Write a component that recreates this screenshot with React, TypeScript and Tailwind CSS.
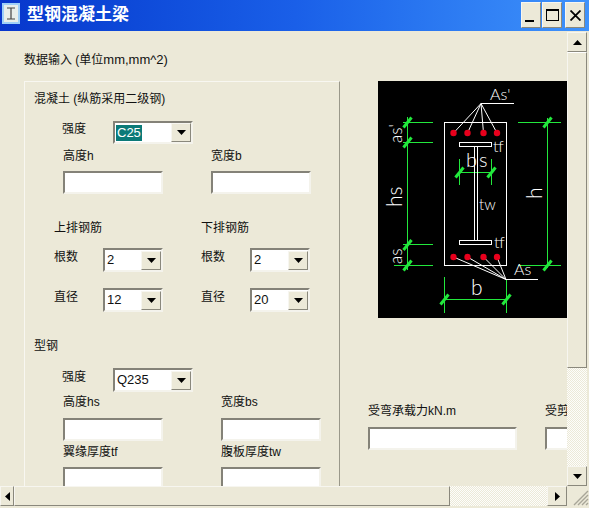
const raised = "border border-t-[#f7f6f0] border-l-[#f7f6f0] border-r-[#8a887c] border-b-[#8a887c] bg-[#ece9d8]";
const sunken = "border-2 border-t-[#848278] border-l-[#848278] border-r-[#f4f3ec] border-b-[#f4f3ec] bg-white";
const track = "bg-[repeating-conic-gradient(#ece9d8_0_25%,#fdfdfb_0_50%)] bg-[length:2px_2px]";

const Arrow = ({ dir }: { dir: "up" | "down" | "left" | "right" }) => {
  const pts = { up: "0,5 9,5 4.5,0", down: "0,0 9,0 4.5,5", left: "5,0 5,9 0,4.5", right: "0,0 0,9 5,4.5" }[dir];
  const horizontal = dir === "left" || dir === "right";
  return (
    <svg width={horizontal ? 5 : 9} height={horizontal ? 9 : 5} viewBox={horizontal ? "0 0 5 9" : "0 0 9 5"}>
      <polygon points={pts} fill="#000" />
    </svg>
  );
};

const Select = ({ value, width, height, selected }: { value: string; width: string; height: string; selected?: boolean }) => (
  <div className={`${width} ${height} ${sunken} flex items-center justify-between`}>
    <span className={selected ? "ml-[1px] bg-[#0b7a78] px-[1px] text-white text-[13px] leading-[16px]" : "ml-[2px] text-[13px] leading-[16px] text-[#111]"}>
      {value}
    </span>
    <div className={`${raised} w-[20px] h-[19px] flex items-center justify-center`}>
      <Arrow dir="down" />
    </div>
  </div>
);

const Field = ({ label, gap }: { label: string; gap: string }) => (
  <div className="flex flex-col">
    <div className="h-4 leading-4 whitespace-nowrap">{label}</div>
    <div className={`${gap} ${sunken} w-[100px] h-[23px]`} />
  </div>
);

const RebarColumn = ({ title, count, dia }: { title: string; count: string; dia: string }) => (
  <div className="flex flex-col w-[147px] shrink-0">
    <div className="h-4 leading-4">{title}</div>
    <div className="flex mt-3">
      <div className="w-[49px] h-4 leading-4 mt-[1px]">根数</div>
      <Select value={count} width="w-[60px]" height="h-[24px]" />
    </div>
    <div className="flex mt-4">
      <div className="w-[49px] h-4 leading-4 mt-[1px]">直径</div>
      <Select value={dia} width="w-[60px]" height="h-[24px]" />
    </div>
  </div>
);

const Tick = ({ x, y }: { x: number; y: number }) => (
  <line x1={x - 4} y1={y + 5} x2={x + 4} y2={y - 5} stroke="#22e83c" strokeWidth="3" />
);

const Rebar = ({ x, y }: { x: number; y: number }) => <circle cx={x} cy={y} r="3.2" fill="#e8001c" />;

const BeamDrawing = () => {
  const green = "#22e83c";
  const rebars = [453.5, 467.5, 483.5, 497];
  const cad = { fill: "#fff", fontFamily: "Lato, 'Liberation Sans', sans-serif", fontWeight: 300 };
  return (
    <svg width="189" height="237" viewBox="378 81 189 237" className="block ml-[10px] bg-black shrink-0">
      <g stroke={green} strokeWidth="1" fill="none">
        <path d="M407.5 117V270M403 122.5H433M403 142.5H433M403 244.5H433M394 265.5H433" />
        <path d="M547.5 118V268M518 122.5H561M518 265.5H561" />
        <path d="M444.5 277V313M506.5 279V313M444.5 299.5H506.5" />
        <path d="M459.5 159V185M491.5 159V185M459.5 172.5H491.5" />
      </g>
      <Tick x={407.5} y={122.5} />
      <Tick x={407.5} y={142.5} />
      <Tick x={407.5} y={245} />
      <Tick x={407.5} y={265.5} />
      <Tick x={547.5} y={122.5} />
      <Tick x={547.5} y={265.5} />
      <Tick x={444.5} y={299.5} />
      <Tick x={506.5} y={299.5} />
      <Tick x={459.5} y={172.5} />
      <Tick x={491.5} y={172.5} />

      <g stroke="#fff" strokeWidth="1" fill="none">
        <rect x="444.5" y="122.5" width="62" height="143" />
        <rect x="459.5" y="142.5" width="32" height="4" />
        <rect x="459.5" y="240.5" width="32" height="4" />
        <path d="M474.5 146.5V240.5M477.5 146.5V240.5" />
        <path d="M481 103.5H514" />
        {rebars.map((x) => (
          <line key={x} x1="481" y1="103.5" x2={x} y2="133" />
        ))}
        <path d="M506 279.5H538" />
        {rebars.map((x) => (
          <line key={x} x1="506" y1="279.5" x2={x} y2="257" />
        ))}
      </g>
      {rebars.map((x) => (
        <Rebar key={`t${x}`} x={x} y={133} />
      ))}
      {rebars.map((x) => (
        <Rebar key={`b${x}`} x={x} y={257} />
      ))}

      <g {...cad}>
        <text x="490" y="100" fontSize="16">As'</text>
        <text x="493" y="152" fontSize="16">tf</text>
        <text x="494" y="248" fontSize="16">tf</text>
        <text x="479" y="210" fontSize="15">tw</text>
        <text x="466" y="167" fontSize="20" letterSpacing="2">bs</text>
        <text x="514" y="275" fontSize="16">As</text>
        <text x="471" y="295" fontSize="21">b</text>
        <text transform="translate(402 143) rotate(-90)" fontSize="17">as'</text>
        <text transform="translate(402 207) rotate(-90)" fontSize="21">hs</text>
        <text transform="translate(402 264) rotate(-90)" fontSize="17">as</text>
        <text transform="translate(542 199) rotate(-90)" fontSize="21">h</text>
      </g>
    </svg>
  );
};

const TitleBar = () => (
  <div className="h-[31px] shrink-0 flex items-start bg-gradient-to-r from-[#0836cc] via-[#1a5fe8] to-[#3f92fb]">
    <svg width="18" height="21" viewBox="0 0 18 21" className="ml-[2px] mt-[3px] shrink-0">
      <rect x="0" y="0" width="18" height="21" fill="#9fd0f8" />
      <rect x="2" y="2" width="14" height="17" fill="#e8eeea" />
      <path d="M5 5H13M5 16H13M9 5V16" stroke="#444" strokeWidth="1.2" fill="none" />
    </svg>
    <div className="ml-[7px] h-[31px] leading-[30px] text-[17px] font-bold text-white whitespace-nowrap">型钢混凝土梁</div>
    <div className="ml-auto mr-[4px] mt-[2px] flex">
      <div className={`${raised} w-[20px] h-[26px]`}>
        <div className="mt-[17px] ml-[3px] w-[9px] h-[2px] bg-black" />
      </div>
      <div className={`${raised} w-[20px] h-[26px] ml-[1px] flex items-center justify-center`}>
        <div className="w-[13px] h-[12px] border border-t-2 border-black" />
      </div>
      <div className={`${raised} w-[20px] h-[26px] ml-[3px] flex items-center justify-center`}>
        <svg width="11" height="11" viewBox="0 0 11 11">
          <path d="M0.5 0.5L10.5 10.5M10.5 0.5L0.5 10.5" stroke="#000" strokeWidth="1.8" />
        </svg>
      </div>
    </div>
  </div>
);

const LeftColumn = () => (
  <div className="w-[340px] shrink-0 pl-6 pt-[21px]">
    <div className="h-4 leading-4 whitespace-nowrap">数据输入 (单位<span className="text-[13px]">mm,mm^2)</span></div>

    {/* one big group: light top and left edge, dark right edge, bottom is scrolled away */}
    <div className="mt-[13px] w-[316px] h-[500px] border-t border-l border-r border-t-[#f8f7f1] border-l-[#f8f7f1] border-r-[#9a988a]">
      <div className="h-[230px]">
        <div className="pt-[9px] ml-[9px] h-[25px] leading-4 whitespace-nowrap">混凝土 (纵筋采用二级钢)</div>
        <div className="flex mt-[14px] ml-[37px]">
          <div className="w-[51px] h-4 leading-4">强度</div>
          <Select value="C25" width="w-[80px]" height="h-[23px]" selected />
        </div>
        <div className="flex mt-[4px] ml-[38px]">
          <div className="w-[148px]"><Field label="高度h" gap="mt-[7px]" /></div>
          <Field label="宽度b" gap="mt-[7px]" />
        </div>
        <div className="flex mt-[26px] ml-[29px]">
          <RebarColumn title="上排钢筋" count="2" dia="12" />
          <RebarColumn title="下排钢筋" count="2" dia="20" />
        </div>
      </div>

      <div className="pt-[26px] ml-[9px] h-[42px] leading-4">型钢</div>
      <div className="flex mt-[14px] ml-[37px]">
        <div className="w-[51px] h-4 leading-4 mt-[1px]">强度</div>
        <Select value="Q235" width="w-[80px]" height="h-[24px]" />
      </div>
      <div className="flex mt-[2px] ml-[38px]">
        <div className="w-[158px]"><Field label="高度hs" gap="mt-[8px]" /></div>
        <Field label="宽度bs" gap="mt-[8px]" />
      </div>
      <div className="flex mt-[3px] ml-[38px]">
        <div className="w-[158px]"><Field label="翼缘厚度tf" gap="mt-[7px]" /></div>
        <Field label="腹板厚度tw" gap="mt-[7px]" />
      </div>
    </div>
  </div>
);

const RightColumn = () => (
  <div className="flex-1 min-w-0 pl-7 pt-[50px] overflow-hidden">
    <BeamDrawing />
    <div className="flex mt-[85px]">
      <div className="shrink-0 w-[149px]">
        <div className="h-4 leading-4 whitespace-nowrap">受弯承载力kN.m</div>
        <div className={`${sunken} mt-2 h-[23px] w-[149px]`} />
      </div>
      <div className="shrink-0 w-[100px] ml-7">
        <div className="h-4 leading-4 whitespace-nowrap">受剪承载力kN</div>
        <div className={`${sunken} mt-2 h-[23px] w-[100px]`} />
      </div>
    </div>
  </div>
);

const VScroll = () => (
  <div className="w-[20px] shrink-0 flex flex-col pt-[1px]">
    <div className={`${raised} h-[20px] flex items-center justify-center`}><Arrow dir="up" /></div>
    <div className={`${raised} h-[316px] border-t-white`} />
    <div className={`${track} flex-1`} />
    <div className={`${raised} h-[20px] flex items-center justify-center`}><Arrow dir="down" /></div>
  </div>
);

const HScroll = () => (
  <div className="h-[20px] shrink-0 flex">
    <div className={`${raised} w-[14px] flex items-center justify-center`}><Arrow dir="left" /></div>
    <div className={`${raised} w-[436px]`} />
    <div className={`${track} flex-1`} />
    <div className={`${raised} w-[20px] flex items-center justify-center`}><Arrow dir="right" /></div>
    <div className="w-[22px] shrink-0 flex items-end justify-end">
      <svg width="18" height="18" viewBox="0 0 18 18">
        <path d="M17 3L3 17M17 7L7 17M17 11L11 17M17 15L15 17" stroke="#a8a698" strokeWidth="1.4" />
      </svg>
    </div>
  </div>
);

export default function App() {
  return (
    <div className="w-[589px] h-[508px] overflow-hidden flex flex-col bg-[#ece9d8] text-[12px] text-[#111] [font-family:'Liberation_Sans','Noto_Sans_CJK_SC',sans-serif]">
      <TitleBar />
      <div className="flex h-[455px] shrink-0">
        <div className="w-[567px] shrink-0 flex overflow-hidden">
          <LeftColumn />
          <RightColumn />
        </div>
        <VScroll />
      </div>
      <HScroll />
    </div>
  );
}
